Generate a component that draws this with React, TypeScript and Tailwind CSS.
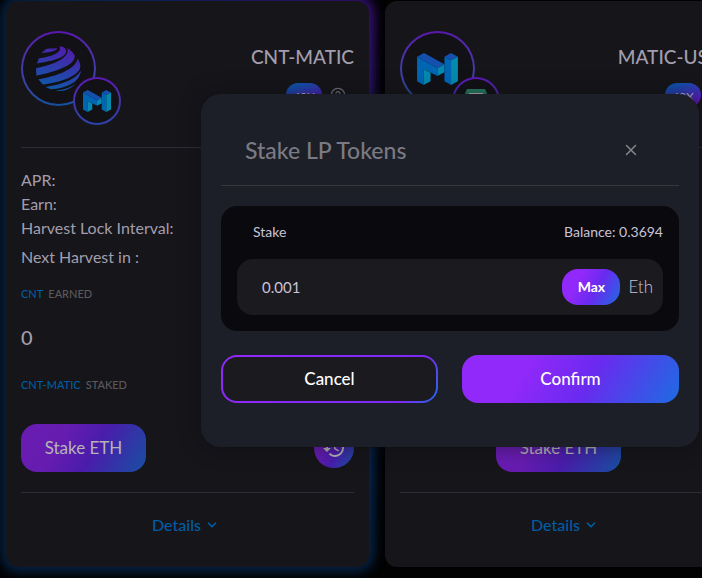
import { useState, type ReactNode } from "react";
import { ChevronDown, CircleHelp, X } from "lucide-react";
import { MdHistory } from "react-icons/md";

type Pool = {
  pair: string;
  boost: string;
  logo: ReactNode;
  subLogo: ReactNode;
  active: boolean;
};

function MaticLogo({ className }: { className: string }) {
  return (
    <svg viewBox="0 0 124 97" className={className} aria-hidden="true">
      <path fill="#1450ad" d="M0 11 21 0l62 34-21 12z" />
      <path fill="#0065b3" d="M0 11l62 35v24L20 49v48L0 86z" />
      <path fill="#0589ae" d="M20 49l21 11v26L20 97zM62 46l21-12v24L62 70z" />
      <path fill="#1450ad" d="M83 11l20-11 21 11-21 11z" />
      <path fill="#0065b3" d="M83 11l20 11v75L83 86z" />
      <path fill="#0589ae" d="M124 11v75l-21 11V22z" />
    </svg>
  );
}

function CntLogo() {
  return (
    <svg viewBox="0 0 134 134" className="h-[45px] w-[45px]" aria-hidden="true">
      <defs>
        <linearGradient id="cnt" gradientUnits="userSpaceOnUse" x1="90" y1="0" x2="45" y2="134">
          <stop offset="0" stopColor="#521aad" />
          <stop offset="0.5" stopColor="#2e3cab" />
          <stop offset="1" stopColor="#0d5aa8" />
        </linearGradient>
      </defs>
      <g fill="url(#cnt)">
        <path d="M16 21C36 20 56 18 64 7 52 8 40 6 30 9z" />
        <path d="M3 52C40 46 96 36 89 12 86 4 78 1 70 1 80 22 42 32 8 37z" />
        <path d="M1 88C50 78 120 58 115 28 110 18 102 12 93 7 104 34 50 58 0 66z" />
        <path d="M7 99C60 90 118 70 124 37 133 52 133 60 130 70 114 96 60 110 20 115z" />
        <path d="M28 122C70 116 114 104 134 74 132 90 120 104 112 109 92 122 64 129 44 129z" />
        <path d="M58 133C84 130 104 124 120 110 106 127 84 135 66 134z" />
      </g>
    </svg>
  );
}

function TetherLogo() {
  return (
    <svg viewBox="0 0 26 24" className="h-7 w-[26px]" aria-hidden="true">
      <path fill="#267a61" d="M4 0h18l4 9-13 13L0 9z" />
      <path fill="#b5b5b5" d="M6 4h14v3h-5v9h-4V7H6z" />
    </svg>
  );
}

const pools: Pool[] = [
  {
    pair: "CNT-MATIC",
    boost: "40X",
    logo: <CntLogo />,
    subLogo: <MaticLogo className="h-[22px] w-7" />,
    active: true,
  },
  {
    pair: "MATIC-USDT",
    boost: "40X",
    logo: <MaticLogo className="h-8 w-[41px]" />,
    subLogo: <TetherLogo />,
    active: false,
  },
];

function PoolCard({ pool }: { pool: Pool }) {
  return (
    <article className="relative w-[363px] shrink-0">
      {pool.active ? (
        <div className="absolute -inset-1 rounded-2xl bg-[linear-gradient(to_top_right,#06274f_0%,#06274f_50%,#0a2f6b_65%,#41108a_100%)] blur-[6px]" />
      ) : null}
      <div className="relative rounded-xl bg-[#16151a] px-[15px] pb-[30px] pt-[30px]">
        <header className="flex h-[116px] justify-between">
          <div className="relative h-[75px] w-[75px]">
            <div className="h-full w-full rounded-full bg-linear-to-b from-[#5a17b0] to-[#13509c] p-[2px]">
              <div className="flex h-full w-full items-center justify-center rounded-full bg-[#121116]">{pool.logo}</div>
            </div>
            <div className="absolute left-[52px] top-[46px] h-12 w-12 rounded-full bg-linear-to-b from-[#5a17b0] to-[#2b42a8] p-[2px]">
              <div className="flex h-full w-full items-center justify-center rounded-full bg-[#121116]">{pool.subLogo}</div>
            </div>
          </div>
          <div className="pt-3">
            <h2 className="text-right text-[19px] font-medium leading-7 text-[#a29eae]">{pool.pair}</h2>
            <div className="mt-3 flex items-center justify-end gap-2 pr-2">
              <span className="flex h-6 w-9 items-center justify-center rounded-full bg-[linear-gradient(160deg,#0b55a8_10%,#5a17b8_80%)] pt-1 text-xs text-[#b5b5b5]">
                {pool.boost}
              </span>
              <CircleHelp className="h-4 w-4 text-[#6f6d76]" />
            </div>
          </div>
        </header>

        <div className="border-t border-[#2f2d38] pt-5 text-base leading-6 text-[#a29eae]">
          <p>APR:</p>
          <p>Earn:</p>
          <p>Harvest Lock Interval:</p>
          <p className="mt-[5px]">Next Harvest in :</p>
        </div>

        <div className="mt-[15px]">
          <p className="text-[11px] font-medium leading-5 text-[#5a595e]">
            <span className="mr-[5px] text-[#005ca3]">CNT</span>EARNED
          </p>
          <p className="mt-[19px] text-xl font-medium leading-7 text-[#a29eae]">0</p>
          <p className="mt-6 text-[11px] font-medium leading-5 text-[#5a595e]">
            <span className="mr-[5px] text-[#005ca3]">{pool.pair}</span>STAKED
          </p>
        </div>

        <div className={`mt-[29px] flex items-center ${pool.active ? "justify-between" : "justify-center pr-4"}`}>
          <button
            type="button"
            className="h-12 w-[125px] rounded-2xl bg-[linear-gradient(120deg,#681cb2_0%,#671cb0_30%,#4a1cab_58%,#1750a2_100%)] text-[17px] text-[#b5b5b5]"
          >
            Stake ETH
          </button>
          {pool.active ? (
            <button
              type="button"
              aria-label="History"
              className="flex h-10 w-10 items-center justify-center rounded-full bg-[linear-gradient(120deg,#681cb2_0%,#671cb0_30%,#4a1cab_58%,#1750a2_100%)] text-[#b5b5b5]"
            >
              <MdHistory className="h-6 w-6" />
            </button>
          ) : null}
        </div>

        <div className="mt-5 border-t border-[#2f2d38] pt-5">
          <button
            type="button"
            className="mx-auto flex items-center gap-1 pr-1 text-base font-medium leading-6 text-[#005ca3]"
          >
            Details
            <ChevronDown className="h-3.5 w-3.5" strokeWidth={3} />
          </button>
        </div>
      </div>
    </article>
  );
}

function StakeModal() {
  const [amount, setAmount] = useState("0.001");

  return (
    <div
      role="dialog"
      aria-labelledby="stake-title"
      className="w-full max-w-[498px] rounded-[20px] bg-[#1c1f27] px-5 pb-11 shadow-[0_0_20px_rgba(10,12,16,0.5)]"
    >
      <div className="flex items-center justify-between border-b border-[#35383c] pb-[19px] pl-6 pr-[39px] pt-10">
        <h1 id="stake-title" className="text-[23px] font-medium leading-8 text-[#7b7a83]">
          Stake LP Tokens
        </h1>
        <button type="button" aria-label="Close" className="text-[#85848c]">
          <X className="h-[18px] w-[18px]" strokeWidth={2} />
        </button>
      </div>

      <div className="mt-5 rounded-2xl bg-[#0a090e] px-4 pb-4">
        <div className="flex items-center justify-between pb-4 pl-4 pt-[15px] text-sm leading-[22px] text-[#c8c3d8]">
          <label htmlFor="amount">Stake</label>
          <span>Balance: 0.3694</span>
        </div>
        <div className="flex h-14 items-center rounded-2xl bg-[#1b1a1f] pl-[25px] pr-2.5 text-[#c8c3d8]">
          <input
            id="amount"
            value={amount}
            onChange={(e) => setAmount(e.target.value)}
            className="min-w-0 flex-1 bg-transparent text-[15px] outline-none"
          />
          <button
            type="button"
            onClick={() => setAmount("0.3694")}
            className="h-9 w-[58px] rounded-2xl bg-[linear-gradient(120deg,#9129fa_0%,#9029f9_30%,#6a2aef_58%,#1d6ce2_100%)] text-sm font-bold text-white"
          >
            Max
          </button>
          <span className="ml-2 text-[17px] font-light">Eth</span>
        </div>
      </div>

      <div className="mt-6 grid grid-cols-2 gap-6">
        <button
          type="button"
          className="h-12 rounded-2xl border-2 border-transparent [background:linear-gradient(#1b1a1f,#1b1a1f)_padding-box,linear-gradient(120deg,#9129fa_0%,#7d2af5_85%,#1d6ce2_100%)_border-box] text-[17px] font-medium text-white"
        >
          Cancel
        </button>
        <button
          type="button"
          className="h-12 rounded-2xl bg-[linear-gradient(120deg,#9129fa_0%,#9029f9_30%,#6a2aef_58%,#1d6ce2_100%)] text-[17px] font-medium text-white"
        >
          Confirm
        </button>
      </div>
    </div>
  );
}

export default function App() {
  return (
    <div className="relative min-h-screen overflow-hidden bg-[#020203] font-['Lato',sans-serif]">
      <main className="flex items-start gap-4 pb-[11px] pl-1.5 pt-px">
        {pools.map((pool) => (
          <PoolCard key={pool.pair} pool={pool} />
        ))}
      </main>
      <div className="absolute inset-0 flex items-start justify-end pr-[3px] pt-[94px]">
        <StakeModal />
      </div>
    </div>
  );
}
